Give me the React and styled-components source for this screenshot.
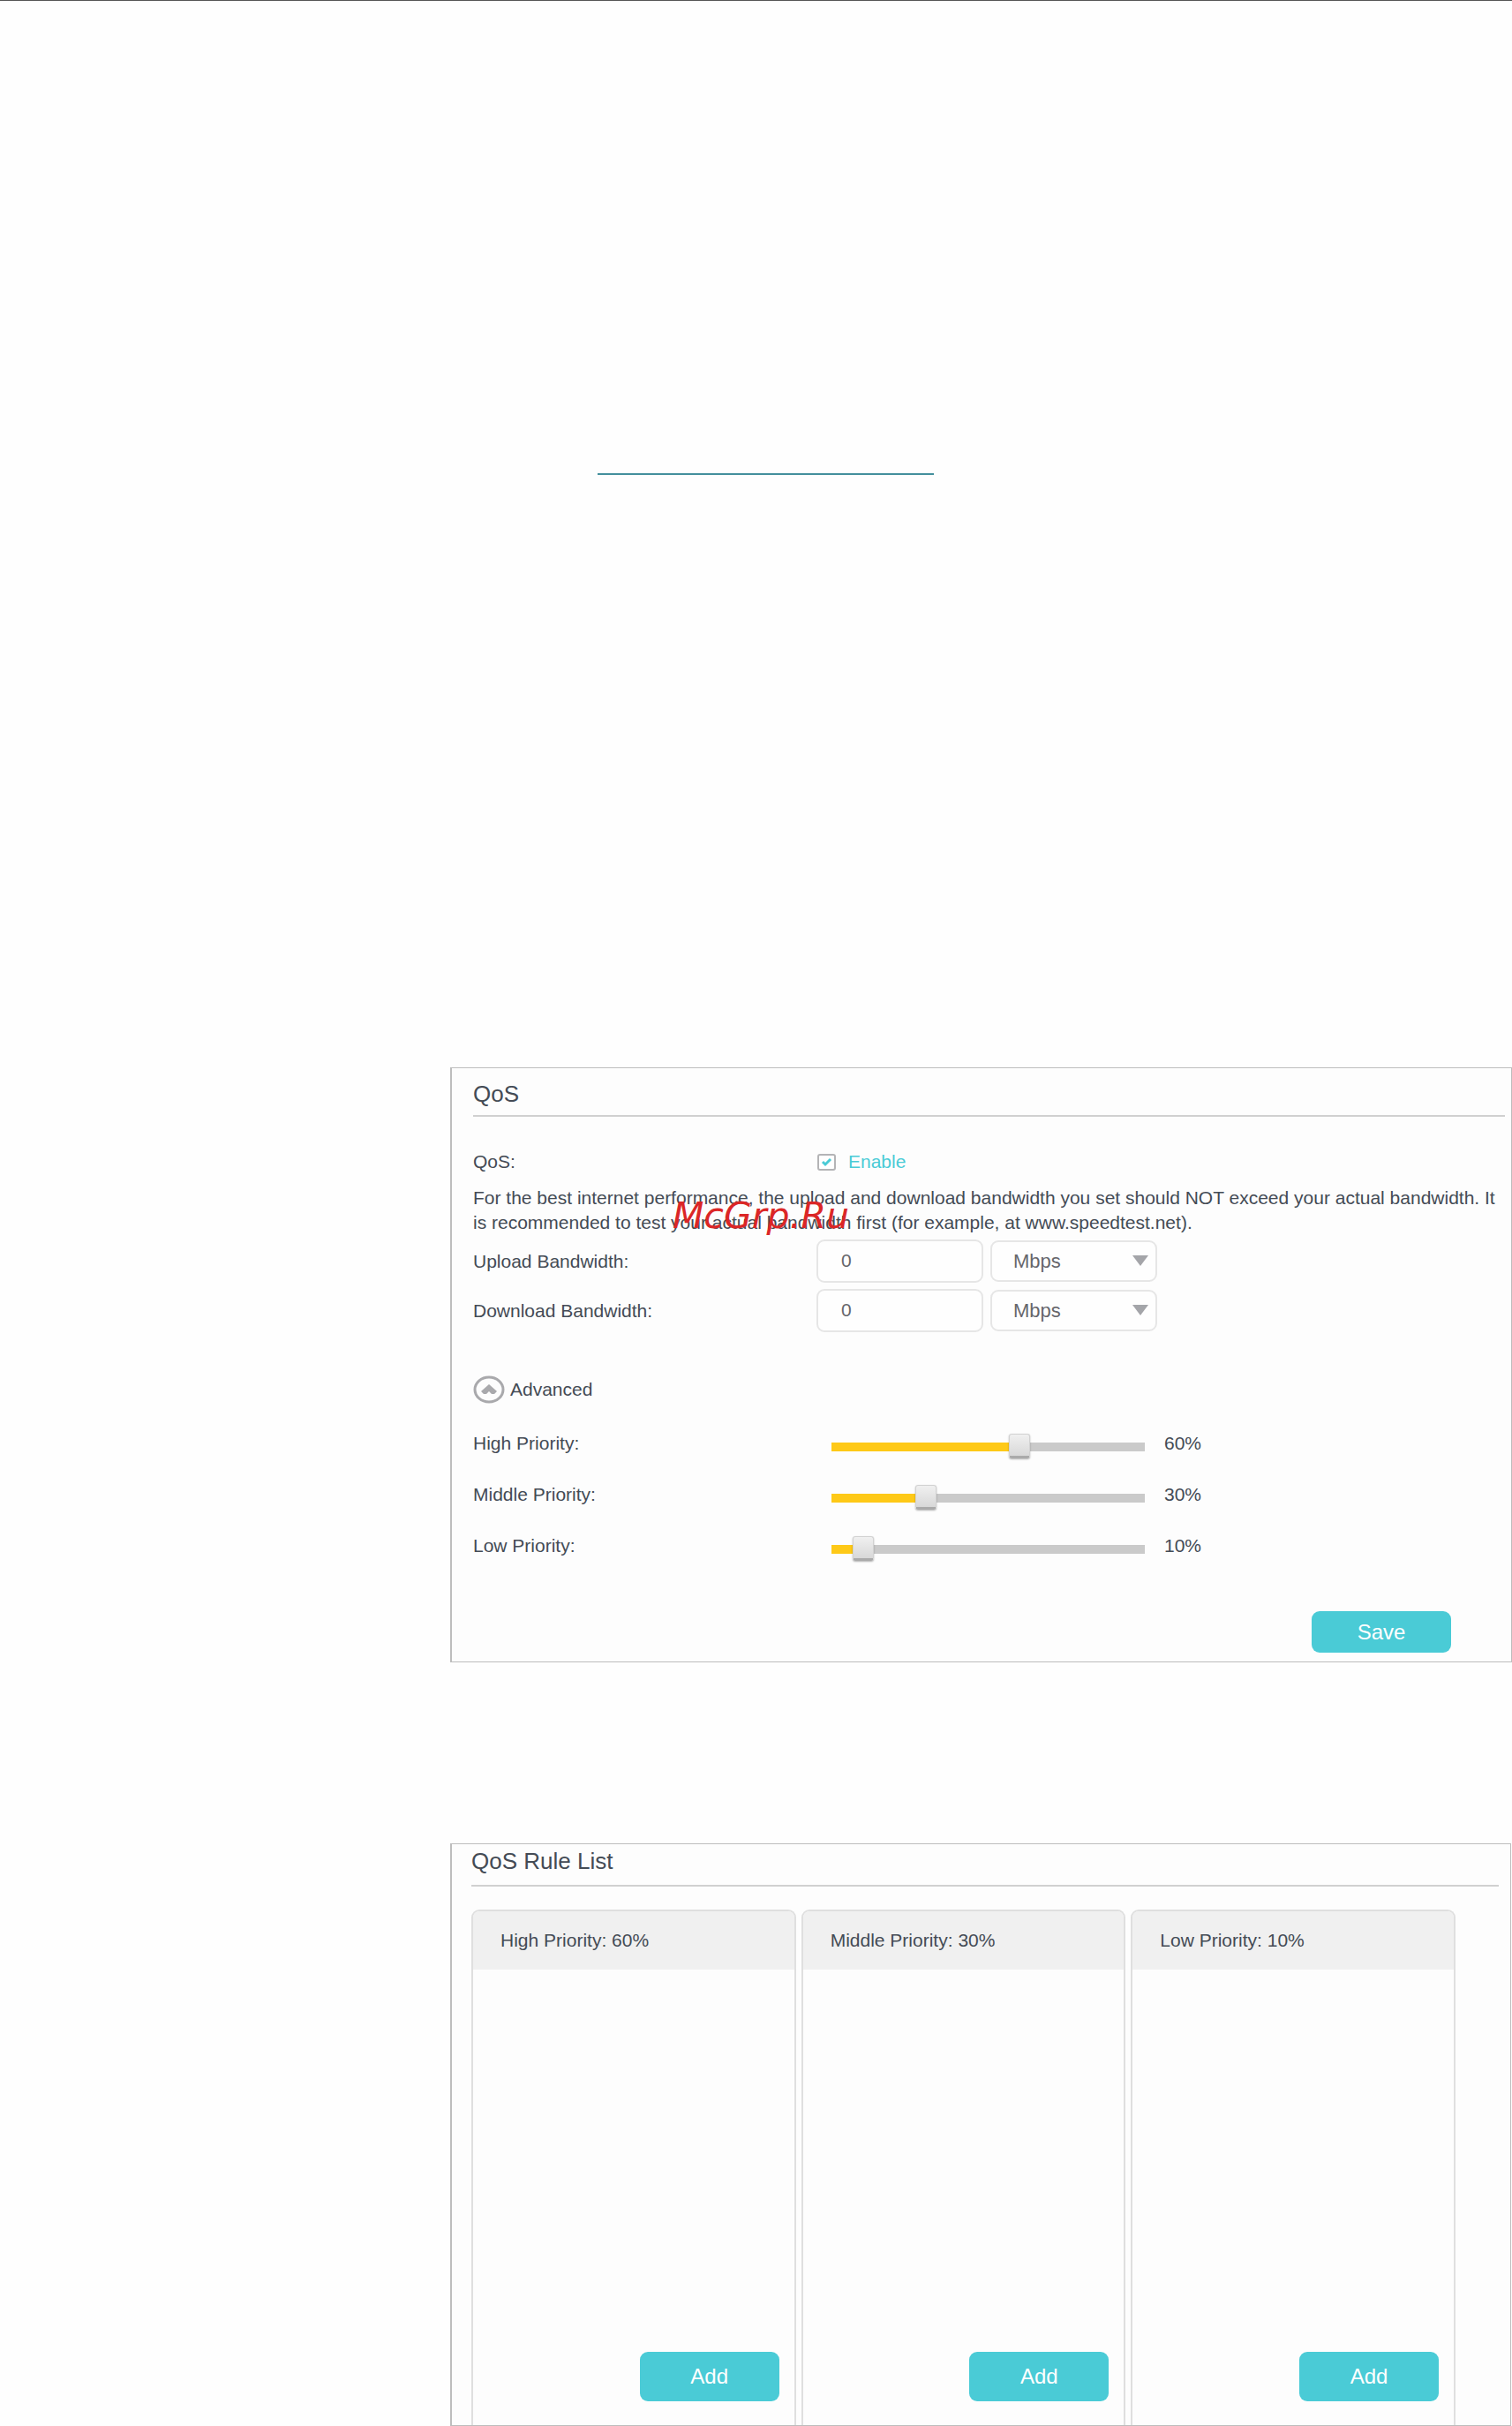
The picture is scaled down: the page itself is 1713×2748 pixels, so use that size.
import React, { useState } from "react";
import styled, { createGlobalStyle } from "styled-components";

const GlobalStyle = createGlobalStyle`
  * {
    box-sizing: border-box;
  }

  body {
    margin: 0;
    background: #fefefe;
    color: #444b55;
    font-family: "Liberation Sans", Arial, sans-serif;
    font-size: 21px;
    line-height: 28px;
  }

  button,
  input,
  select {
    font-family: inherit;
    margin: 0;
  }
`;

const Page = styled.main`
  border-top: 1px solid #555;
  padding-left: 510px;
`;

const Rule = styled.hr`
  width: 381px;
  height: 2px;
  margin: 535px 0 671px 167px;
  border: 0;
  background: #448f9c;
`;

const Panel = styled.section`
  border: 1px solid #bdbdbd;
  border-left-width: 2px;
  background: #fdfdfd;
`;

const QosPanel = styled(Panel)`
  padding: 17px 7px 10px 24px;
`;

const RulePanel = styled(Panel)`
  margin-top: 205px;
  margin-right: 1px;
  padding: 7px 13px 0 22px;
`;

const Title = styled.h2`
  margin: 0;
  padding-bottom: 12px;
  border-bottom: 2px solid #d0d0d0;
  font-size: 26px;
  font-weight: normal;
  line-height: 24px;
`;

const RuleTitle = styled(Title)`
  padding-bottom: 15px;
`;

const Row = styled.div`
  display: grid;
  grid-template-columns: 389px 1fr;
  align-items: center;
  min-height: ${(props) => props.$height}px;
`;

const QosRow = styled(Row)`
  margin-top: 37px;
`;

const EnableLabel = styled.label`
  display: flex;
  align-items: center;
  gap: 14px;
  padding-left: 1px;
  color: #4acbd6;
`;

const CheckBox = styled.span`
  position: relative;
  display: flex;
  width: 21px;
  height: 19px;

  svg {
    position: absolute;
    inset: 0;
    pointer-events: none;
  }
`;

const CheckInput = styled.input`
  appearance: none;
  width: 100%;
  height: 100%;
  border: 2px solid #b4b4b6;
  border-radius: 3px;
  background: #fff;

  &:not(:checked) + svg {
    display: none;
  }
`;

const NoteWrap = styled.div`
  position: relative;
  margin-top: 13px;
`;

const Note = styled.p`
  margin: 0;
`;

const Watermark = styled.span`
  position: absolute;
  left: 226px;
  top: 14px;
  color: #db2626;
  font-family: "DejaVu Sans", Verdana, sans-serif;
  font-size: 41px;
  font-style: italic;
  line-height: 40px;
`;

const Fields = styled.div`
  display: grid;
  gap: 7px;
  margin-top: 5px;
`;

const FieldGroup = styled.div`
  display: flex;
  align-items: center;
  gap: 8px;
`;

const TextBox = styled.input`
  width: 189px;
  height: 49px;
  padding: 0 26px 2px;
  border: 2px solid #e6e6e6;
  border-radius: 9px;
  background: #fefefe;
  color: #66666b;
  font-size: 21px;
`;

const SelectWrap = styled.div`
  position: relative;
  width: 189px;

  svg {
    position: absolute;
    right: 10px;
    top: 17px;
    pointer-events: none;
  }
`;

const Select = styled.select`
  display: block;
  appearance: none;
  width: 100%;
  height: 47px;
  padding: 0 24px;
  border: 2px solid #e6e6e6;
  border-radius: 9px;
  background: #fefefe;
  color: #66666b;
  font-size: 22px;
`;

const Advanced = styled.button`
  display: flex;
  align-items: center;
  gap: 6px;
  margin-top: 49px;
  padding: 0;
  border: 0;
  background: none;
  color: inherit;
  font-size: 21px;
  line-height: 28px;
`;

const Priorities = styled.div`
  margin-top: 16px;
`;

const SliderGroup = styled.div`
  display: flex;
  align-items: center;
  padding-left: 5px;
`;

/* the track is inset by half a thumb, so the thumb's centre sits on the value */
const Slider = styled.input`
  appearance: none;
  width: 379px;
  height: 30px;
  margin: 6px 10px 0 0;
  background: linear-gradient(
      to right,
      #fec917 ${(props) => props.value}%,
      #cacaca ${(props) => props.value}%
    )
    12px 11px / calc(100% - 24px) 10px no-repeat;

  &::-webkit-slider-thumb {
    appearance: none;
    width: 24px;
    height: 28px;
    border: 1px solid #d2d2d2;
    border-bottom: 3px solid #aaa;
    border-radius: 3px;
    background: linear-gradient(#f0f0f0, #d8d8d8);
    box-shadow: 0 1px 2px rgba(0, 0, 0, 0.3);
  }
`;

const Button = styled.button`
  display: block;
  width: 158px;
  height: ${(props) => props.$height}px;
  margin-left: auto;
  border: 0;
  border-radius: 9px;
  background: #4acbd6;
  color: #fff;
  font-size: 24px;
`;

const Actions = styled.div`
  margin-top: 45px;
  padding-right: 61px;
`;

const Columns = styled.div`
  display: grid;
  grid-template-columns: repeat(3, 1fr);
  gap: 6px;
  margin-top: 26px;
  padding-right: 49px;
`;

const Column = styled.article`
  display: flex;
  flex-direction: column;
  min-height: 584px;
  border: 2px solid #dfdfdf;
  border-bottom: 0;
  border-radius: 9px 9px 0 0;
  overflow: hidden;
`;

const ColumnTitle = styled.h3`
  margin: 0;
  padding: 19px 31px;
  background: #f0f0f0;
  font-size: 21px;
  font-weight: normal;
  line-height: 28px;
`;

const ColumnActions = styled.div`
  margin-top: auto;
  padding: 0 17px 27px;
`;

const ArrowDown = () => (
  <svg width="18" height="12" viewBox="0 0 18 12" aria-hidden="true">
    <path d="M0 0h18L9 12z" fill="#a4a5a9" />
  </svg>
);

const CircleUp = () => (
  <svg width="36" height="32" viewBox="0 0 36 32" aria-hidden="true">
    <ellipse cx="18" cy="16" rx="16" ry="14" fill="none" stroke="#a9a9ac" strokeWidth="3" />
    <path d="M9 18l9-8 9 8-3 3h-3l-3-3-3 3h-3z" fill="#a9a9ac" />
  </svg>
);

const Bandwidth = ({ id, label }) => (
  <Row $height={49}>
    <label htmlFor={id}>{label}</label>
    <FieldGroup>
      <TextBox id={id} type="text" defaultValue="0" />
      <SelectWrap>
        <Select aria-label={`${label} unit`} defaultValue="Mbps">
          <option>Mbps</option>
          <option>Kbps</option>
        </Select>
        <ArrowDown />
      </SelectWrap>
    </FieldGroup>
  </Row>
);

const Priority = ({ id, name, value, onChange }) => (
  <Row $height={58}>
    <label htmlFor={id}>{name} Priority:</label>
    <SliderGroup>
      <Slider
        id={id}
        type="range"
        min="0"
        max="100"
        value={value}
        onChange={(e) => onChange(id, Number(e.target.value))}
      />
      <output htmlFor={id}>{value}%</output>
    </SliderGroup>
  </Row>
);

export default function App() {
  const [priorities, setPriorities] = useState([
    { id: "high", name: "High", value: 60 },
    { id: "middle", name: "Middle", value: 30 },
    { id: "low", name: "Low", value: 10 },
  ]);

  const change = (id, value) =>
    setPriorities(priorities.map((p) => (p.id === id ? { ...p, value } : p)));

  return (
    <Page>
      <GlobalStyle />
      <Rule />
      <QosPanel>
        <Title>QoS</Title>
        <QosRow $height={28}>
          <span>QoS:</span>
          <EnableLabel>
            <CheckBox>
              <CheckInput type="checkbox" defaultChecked />
              <svg viewBox="0 0 21 19" aria-hidden="true">
                <path d="M6 9l3 3 6-6" fill="none" stroke="#4acbd6" strokeWidth="3" />
              </svg>
            </CheckBox>
            Enable
          </EnableLabel>
        </QosRow>
        <NoteWrap>
          <Note>
            For the best internet performance, the upload and download bandwidth
            you set should NOT exceed your actual bandwidth. It is recommended
            to test your actual bandwidth first (for example, at
            www.speedtest.net).
          </Note>
          <Watermark>McGrp.Ru</Watermark>
        </NoteWrap>
        <Fields>
          <Bandwidth id="upload" label="Upload Bandwidth:" />
          <Bandwidth id="download" label="Download Bandwidth:" />
        </Fields>
        <Advanced type="button" aria-expanded="true">
          <CircleUp />
          Advanced
        </Advanced>
        <Priorities>
          {priorities.map((p) => (
            <Priority key={p.id} {...p} onChange={change} />
          ))}
        </Priorities>
        <Actions>
          <Button type="button" $height={47}>
            Save
          </Button>
        </Actions>
      </QosPanel>
      <RulePanel>
        <RuleTitle>QoS Rule List</RuleTitle>
        <Columns>
          {priorities.map((p) => (
            <Column key={p.id}>
              <ColumnTitle>
                {p.name} Priority: {p.value}%
              </ColumnTitle>
              <ColumnActions>
                <Button type="button" $height={56}>
                  Add
                </Button>
              </ColumnActions>
            </Column>
          ))}
        </Columns>
      </RulePanel>
    </Page>
  );
}
